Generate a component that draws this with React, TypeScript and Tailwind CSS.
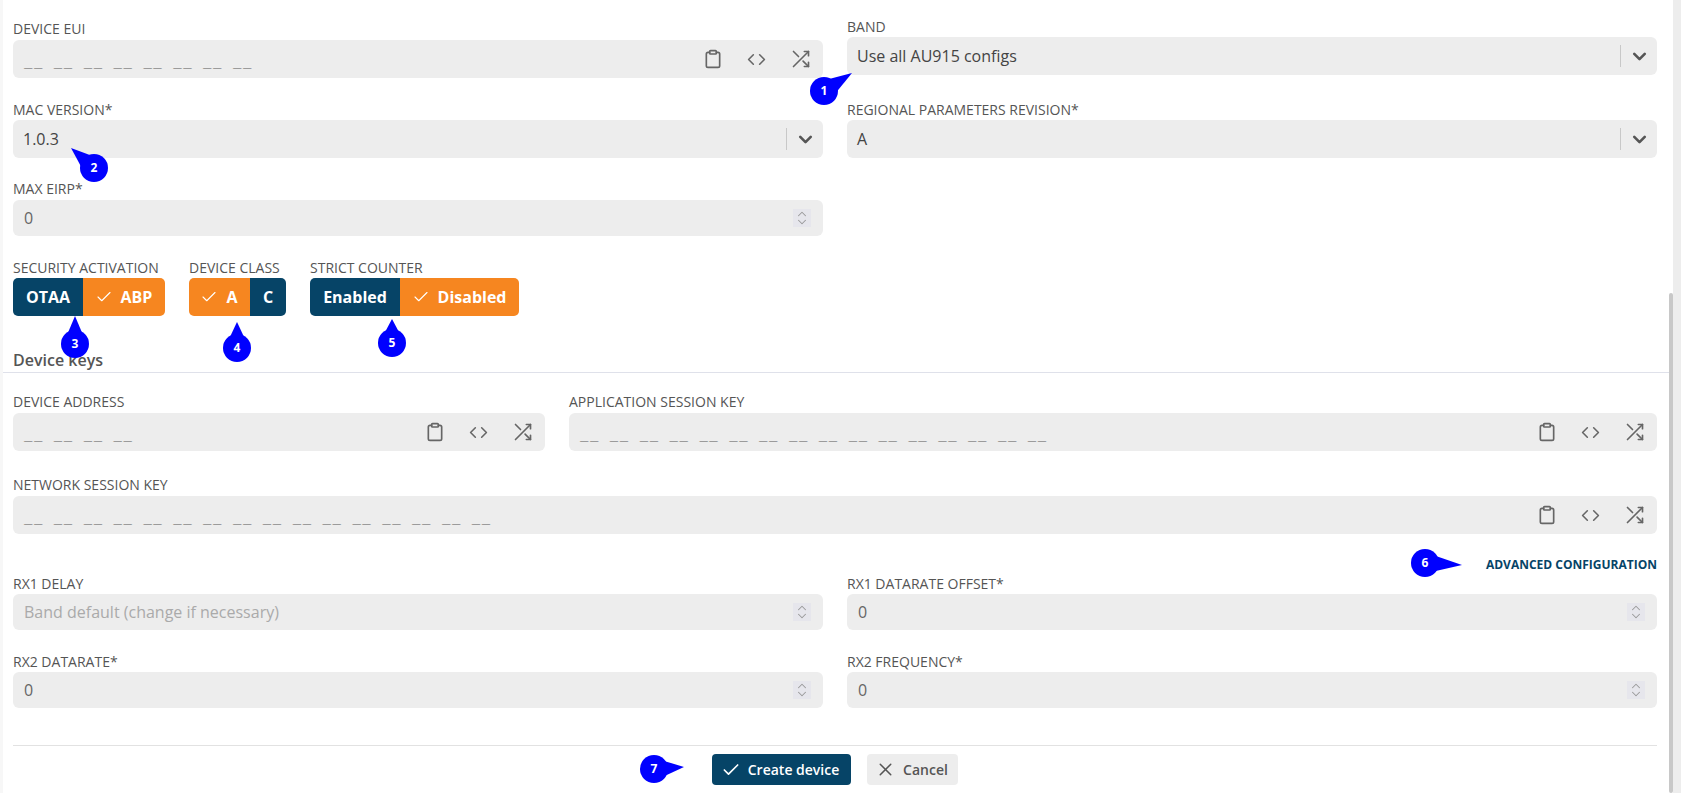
// App.tsx
import type { ReactNode } from 'react';
import { Check, ChevronDown, ChevronUp, Clipboard, X } from 'lucide-react';

const pins = [
  { n: 1, x: 824, y: 91, tx: 852, ty: 73 },
  { n: 2, x: 94, y: 168, tx: 71, ty: 148 },
  { n: 3, x: 75, y: 344, tx: 75, ty: 316 },
  { n: 4, x: 237, y: 348, tx: 237, ty: 322 },
  { n: 5, x: 392, y: 343, tx: 392, ty: 319 },
  { n: 6, x: 1425, y: 563, tx: 1462, ty: 565 },
  { n: 7, x: 654, y: 769, tx: 684, ty: 767 },
];

function Pins() {
  return (
    <svg className="absolute inset-0 w-full h-full pointer-events-none" viewBox="0 0 1681 793">
      {pins.map((p) => {
        const dx = p.tx - p.x;
        const dy = p.ty - p.y;
        const len = Math.hypot(dx, dy);
        const ox = (-dy / len) * 8;
        const oy = (dx / len) * 8;
        const bx = p.x + (dx / len) * 9;
        const by = p.y + (dy / len) * 9;
        return (
          <g key={p.n}>
            <circle cx={p.x} cy={p.y} r={14} fill="#0000ff" />
            <polygon
              points={`${p.tx},${p.ty} ${bx + ox},${by + oy} ${bx - ox},${by - oy}`}
              fill="#0000ff"
            />
            <text
              x={p.x}
              y={p.y + 4}
              textAnchor="middle"
              fill="#ffffff"
              fontSize="12"
              fontWeight="700"
              fontFamily="Open Sans, sans-serif"
            >
              {p.n}
            </text>
          </g>
        );
      })}
    </svg>
  );
}

function Label({ children }: { children: ReactNode }) {
  return <div className="h-5 leading-5 text-[14px] text-[#555] uppercase whitespace-nowrap">{children}</div>;
}

function ShuffleIcon() {
  return (
    <svg width="20" height="20" viewBox="0 0 24 24" fill="none" stroke="#666" strokeWidth="2" strokeLinecap="round" strokeLinejoin="round">
      <polyline points="16 3 21 3 21 8" />
      <line x1="3" y1="21" x2="21" y2="3" />
      <polyline points="21 16 21 21 16 21" />
      <line x1="14.5" y1="14.5" x2="21" y2="21" />
      <line x1="3" y1="3" x2="9" y2="9" />
    </svg>
  );
}

function CodeIcon() {
  return (
    <svg width="19" height="19" viewBox="0 0 24 24" fill="none" stroke="#666" strokeWidth="2" strokeLinecap="round" strokeLinejoin="round">
      <polyline points="8 6 2 12 8 18" />
      <polyline points="16 6 22 12 16 18" />
    </svg>
  );
}

function KeyField({ label, groups }: { label: string; groups: number }) {
  const holder = Array.from({ length: groups }, () => '__').join(' ');
  return (
    <div>
      <Label>{label}</Label>
      <div className="mt-px h-[38px] bg-[#ededed] rounded-md flex items-center pl-[11px] pr-3">
        <span className="flex-1 pt-[8px] font-['Liberation_Mono',monospace] text-[14px] font-bold tracking-[1.55px] text-[#5c5c5c] whitespace-pre">
          {holder}
        </span>
        <div className="flex items-center gap-6">
          <Clipboard size={20} color="#666" />
          <CodeIcon />
          <div className="ml-px">
            <ShuffleIcon />
          </div>
        </div>
      </div>
    </div>
  );
}

function SelectField({ label, value }: { label: string; value: string }) {
  return (
    <div>
      <Label>{label}</Label>
      <div className="h-[38px] bg-[#ededed] rounded-md flex items-center pl-[10px]">
        <span className="flex-1 text-[16px] text-[#444]">{value}</span>
        <div className="w-px h-[22px] bg-[#c8c8c8]" />
        <div className="w-[36px] flex justify-center">
          <ChevronDown size={21} strokeWidth={3} color="#555" />
        </div>
      </div>
    </div>
  );
}

function NumberField({ label, value, muted = false, tight = false }: { label: string; value: string; muted?: boolean; tight?: boolean }) {
  return (
    <div>
      <Label>{label}</Label>
      <div className={`${tight ? 'mt-0' : 'mt-px'} h-[36px] bg-[#ededed] rounded-md flex items-center pl-[11px] pr-3`}>
        <span className={`flex-1 text-[16px] ${muted ? 'text-[#aaa]' : 'text-[#666]'}`}>{value}</span>
        <div className="w-[18px] h-[18px] bg-[#e6e6ec] flex flex-col items-center justify-center">
          <div className="h-[8px] flex items-center">
            <ChevronUp size={14} strokeWidth={1.75} color="#999" />
          </div>
          <div className="h-[8px] flex items-center">
            <ChevronDown size={14} strokeWidth={1.75} color="#999" />
          </div>
        </div>
      </div>
    </div>
  );
}

function Toggle({ label, items }: { label: string; items: { text: string; on: boolean; w: string }[] }) {
  return (
    <div>
      <Label>{label}</Label>
      <div className="h-[38px] flex rounded-[5px] overflow-hidden">
        {items.map((it) => (
          <div
            key={it.text}
            className={`${it.w} flex items-center justify-center gap-2 text-[16px] font-bold text-white ${
              it.on ? 'bg-[#f68620] pr-px' : 'bg-[#064467]'
            }`}
          >
            {it.on && <Check size={18} strokeWidth={1.5} />}
            {it.text}
          </div>
        ))}
      </div>
    </div>
  );
}

export default function App() {
  return (
    <div className="relative h-[793px] w-full overflow-hidden flex bg-white font-['Open_Sans',sans-serif]">
      <div className="w-[3px] bg-[#f7f7f7]" />
      <main className="flex-1 min-w-0">
        {/* device */}
        <div className="pl-[10px] pr-[12px]">
          <div className="grid grid-cols-2 gap-x-6">
            <div className="pt-[19px]">
              <KeyField label="Device EUI" groups={8} />
              <div className="mt-[22px]">
                <SelectField label="MAC Version*" value="1.0.3" />
              </div>
              <div className="mt-[21px]">
                <NumberField label="Max EIRP*" value="0" />
              </div>
            </div>
            <div className="pt-[17px]">
              <SelectField label="Band" value="Use all AU915 configs" />
              <div className="mt-[25px]">
                <SelectField label="Regional Parameters Revision*" value="A" />
              </div>
            </div>
          </div>
          <div className="mt-[22px] flex gap-6">
            <Toggle
              label="Security Activation"
              items={[
                { text: 'OTAA', on: false, w: 'w-[70px]' },
                { text: 'ABP', on: true, w: 'w-[82px]' },
              ]}
            />
            <Toggle
              label="Device Class"
              items={[
                { text: 'A', on: true, w: 'w-[61px]' },
                { text: 'C', on: false, w: 'w-[36px]' },
              ]}
            />
            <Toggle
              label="Strict Counter"
              items={[
                { text: 'Enabled', on: false, w: 'w-[90px]' },
                { text: 'Disabled', on: true, w: 'w-[119px]' },
              ]}
            />
          </div>
        </div>

        {/* keys */}
        <h2 className="mt-8 h-[25px] leading-6 pl-[10px] text-[16px] font-semibold text-[#555] border-b border-[#dfe1ea]">
          Device keys
        </h2>
        <div className="pl-[10px] pr-[12px]">
          <div className="mt-[19px] grid grid-cols-3 gap-x-6">
            <KeyField label="Device Address" groups={4} />
            <div className="col-span-2">
              <KeyField label="Application Session Key" groups={16} />
            </div>
          </div>
          <div className="mt-6">
            <KeyField label="Network Session Key" groups={16} />
          </div>
          <div className="mt-[21px] h-[19px] leading-5 text-right text-[12px] font-bold text-[#064467]">ADVANCED CONFIGURATION</div>
          <div className="grid grid-cols-2 gap-x-6">
            <NumberField label="RX1 Delay" value="Band default (change if necessary)" muted tight />
            <NumberField label="RX1 Datarate Offset*" value="0" tight />
          </div>
          <div className="mt-[22px] grid grid-cols-2 gap-x-6">
            <NumberField label="RX2 Datarate*" value="0" tight />
            <NumberField label="RX2 Frequency*" value="0" tight />
          </div>
          <div className="mt-[37px] border-t border-[#e2e2e2] pt-[8px] flex justify-center gap-4">
            <button className="h-[31px] w-[139px] pr-[3px] rounded bg-[#064467] text-white text-[14px] font-semibold flex items-center justify-center gap-[7px]">
              <Check size={20} />
              Create device
            </button>
            <button className="h-[31px] w-[91px] pr-[2px] rounded bg-[#ededed] text-[#555] text-[14px] font-semibold flex items-center justify-center gap-[7px]">
              <X size={21} strokeWidth={1.75} />
              Cancel
            </button>
          </div>
        </div>
      </main>
      {/* scrollbar */}
      <div className="w-[12px] flex">
        <div className="w-[4px] mt-[293px] rounded-full bg-[#c8c8c8]" />
        <div className="w-[8px] bg-[#ededed]" />
      </div>
      <Pins />
    </div>
  );
}
